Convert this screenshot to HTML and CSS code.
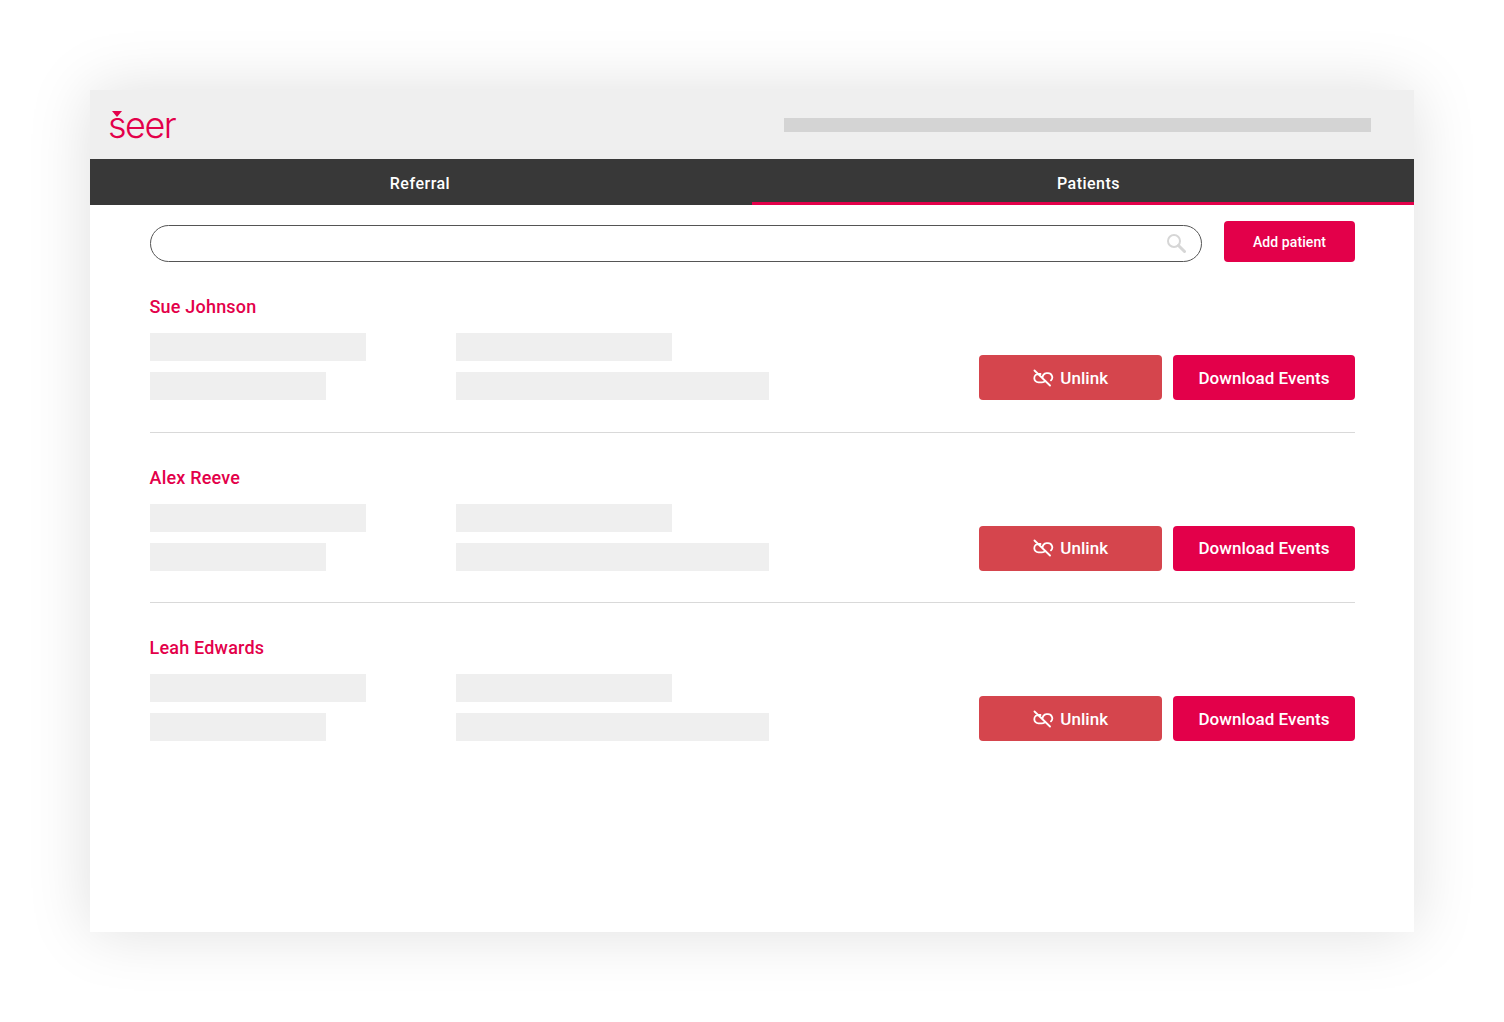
FILE: index.html
```html
<!DOCTYPE html>
<html lang="en">
<head>
<meta charset="utf-8">
<title>Seer patients</title>
<link rel="stylesheet" href="styles.css">
</head>
<body>
<svg class="defs" width="0" height="0" aria-hidden="true">
  <symbol id="unlink" viewBox="0 0 22 18">
    <path d="M8.500 5H6.500a4.200 4.200 0 0 0 0 8.400H10a4.200 4.200 0 0 0 3.300-1.700M10.700 9.300A4.200 4.200 0 0 1 14.500 4.200H16a4.200 4.200 0 0 1 3 7.200M2.500 1.500L18 16.500" fill="none" stroke="currentColor" stroke-width="1.800" stroke-linecap="round"/>
  </symbol>
</svg>
<main class="window">
  <header class="topbar">
    <div class="logo"><span class="logo-mark"></span><span class="logo-text">seer</span></div>
    <div class="topbar-bar"></div>
  </header>
  <nav class="tabs">
    <div class="tab">Referral</div>
    <div class="tab tab-active">Patients</div>
  </nav>
  <section class="content">
    <div class="toolbar">
      <div class="search">
        <svg class="search-icon" viewBox="0 0 20 20" aria-hidden="true"><circle cx="8" cy="8" r="6" fill="none" stroke="currentColor" stroke-width="2"/><path d="M12.500 12.500l6 6" fill="none" stroke="currentColor" stroke-width="3" stroke-linecap="round"/></svg>
      </div>
      <button class="btn btn-add">Add patient</button>
    </div>
    <article class="patient">
      <h2 class="name">Sue Johnson</h2>
      <div class="details">
        <div class="col col-one"><div class="ph ph-a"></div><div class="ph ph-b"></div></div>
        <div class="col"><div class="ph ph-a"></div><div class="ph ph-c"></div></div>
        <div class="actions">
          <button class="btn btn-unlink"><svg class="unlink-icon"><use href="#unlink"/></svg>Unlink</button>
          <button class="btn btn-download">Download Events</button>
        </div>
      </div>
    </article>
    <article class="patient">
      <h2 class="name">Alex Reeve</h2>
      <div class="details">
        <div class="col col-one"><div class="ph ph-a"></div><div class="ph ph-b"></div></div>
        <div class="col"><div class="ph ph-a"></div><div class="ph ph-c"></div></div>
        <div class="actions">
          <button class="btn btn-unlink"><svg class="unlink-icon"><use href="#unlink"/></svg>Unlink</button>
          <button class="btn btn-download">Download Events</button>
        </div>
      </div>
    </article>
    <article class="patient patient-last">
      <h2 class="name">Leah Edwards</h2>
      <div class="details">
        <div class="col col-one"><div class="ph ph-a"></div><div class="ph ph-b"></div></div>
        <div class="col"><div class="ph ph-a"></div><div class="ph ph-c"></div></div>
        <div class="actions">
          <button class="btn btn-unlink"><svg class="unlink-icon"><use href="#unlink"/></svg>Unlink</button>
          <button class="btn btn-download">Download Events</button>
        </div>
      </div>
    </article>
  </section>
</main>
</body>
</html>
```
FILE: styles.css
```css
* { box-sizing: border-box; }
html, body { height: 100%; }
body {
  margin: 0;
  padding: 90px;
  background: #fff;
  font-family: Roboto, "Liberation Sans", sans-serif;
  overflow: hidden;
}
.defs { position: absolute; }
.window {
  width: 1324px;
  height: 842px;
  background: #fff;
  box-shadow: 0 0 60px rgba(0, 0, 0, .13);
}
.topbar {
  height: 69px;
  padding: 0 43px 0 18px;
  background: #efefef;
  display: flex;
  align-items: center;
  justify-content: space-between;
}
.logo {
  position: relative;
  width: 68px;
  height: 30px;
  margin-top: 1px;
  color: #e3004a;
}
.logo-mark {
  position: absolute;
  left: 4px;
  top: 1px;
  border-left: 5px solid transparent;
  border-right: 5px solid transparent;
  border-top: 6px solid #e3004a;
}
.logo-text {
  display: block;
  font-family: Inter, sans-serif;
  font-weight: 300;
  font-size: 36px;
  line-height: 30px;
  letter-spacing: -1.500px;
}
.topbar-bar {
  width: 587px;
  height: 14px;
  background: #d4d4d4;
}
.tabs {
  display: grid;
  grid-template-columns: 662px 662px;
  height: 46px;
  background: #383838;
}
.tab {
  height: 46px;
  color: #fff;
  font-size: 16px;
  font-weight: 500;
  letter-spacing: .5px;
  line-height: 50px;
  text-align: center;
}
.tab:first-child { padding-right: 2px; }
.tab-active {
  padding-left: 11px;
  border-bottom: 3px solid #e3004a;
}
.content {
  padding: 16px 59px 0 59.500px;
}
.toolbar {
  display: flex;
  justify-content: space-between;
  align-items: flex-end;
  height: 41px;
}
.search {
  width: 1052.500px;
  height: 37px;
  padding: 0 15px 2px 0;
  border: 1px solid #555;
  border-radius: 19px;
  display: flex;
  align-items: center;
  justify-content: flex-end;
}
.search-icon {
  width: 20px;
  height: 20px;
  color: #d6d6d6;
}
.btn {
  border: 0;
  border-radius: 4px;
  color: #fff;
  font-family: inherit;
  font-weight: 500;
  padding: 0;
  display: flex;
  align-items: center;
  justify-content: center;
}
.btn-add {
  width: 131px;
  height: 41px;
  font-size: 14px;
  letter-spacing: .1px;
  background: #e3004a;
}
.patient {
  height: 170.500px;
  padding-top: 34px;
  border-bottom: 1px solid #d9d9d9;
}
.patient-last { border-bottom: 0; }
.name {
  margin: 0;
  height: 22px;
  color: #e3004a;
  font-size: 18px;
  font-weight: 500;
  letter-spacing: .2px;
  line-height: 22px;
}
.details {
  display: flex;
  margin-top: 15px;
}
.col {
  display: flex;
  flex-direction: column;
  gap: 11px;
}
.col-one { width: 306.500px; }
.ph {
  height: 28px;
  background: #efefef;
}
.ph-a { width: 216px; }
.ph-b { width: 176px; }
.ph-c { width: 313px; }
.actions {
  display: flex;
  gap: 11.500px;
  margin-left: auto;
  align-items: flex-end;
}
.btn-unlink, .btn-download {
  height: 45px;
  font-size: 17px;
  letter-spacing: .05px;
  margin-top: 22px;
}
.btn-unlink {
  width: 182.500px;
  background: #d5454d;
  gap: 6px;
}
.btn-download {
  width: 182px;
  background: #e3004a;
}
.unlink-icon {
  width: 22px;
  height: 18px;
}
```
